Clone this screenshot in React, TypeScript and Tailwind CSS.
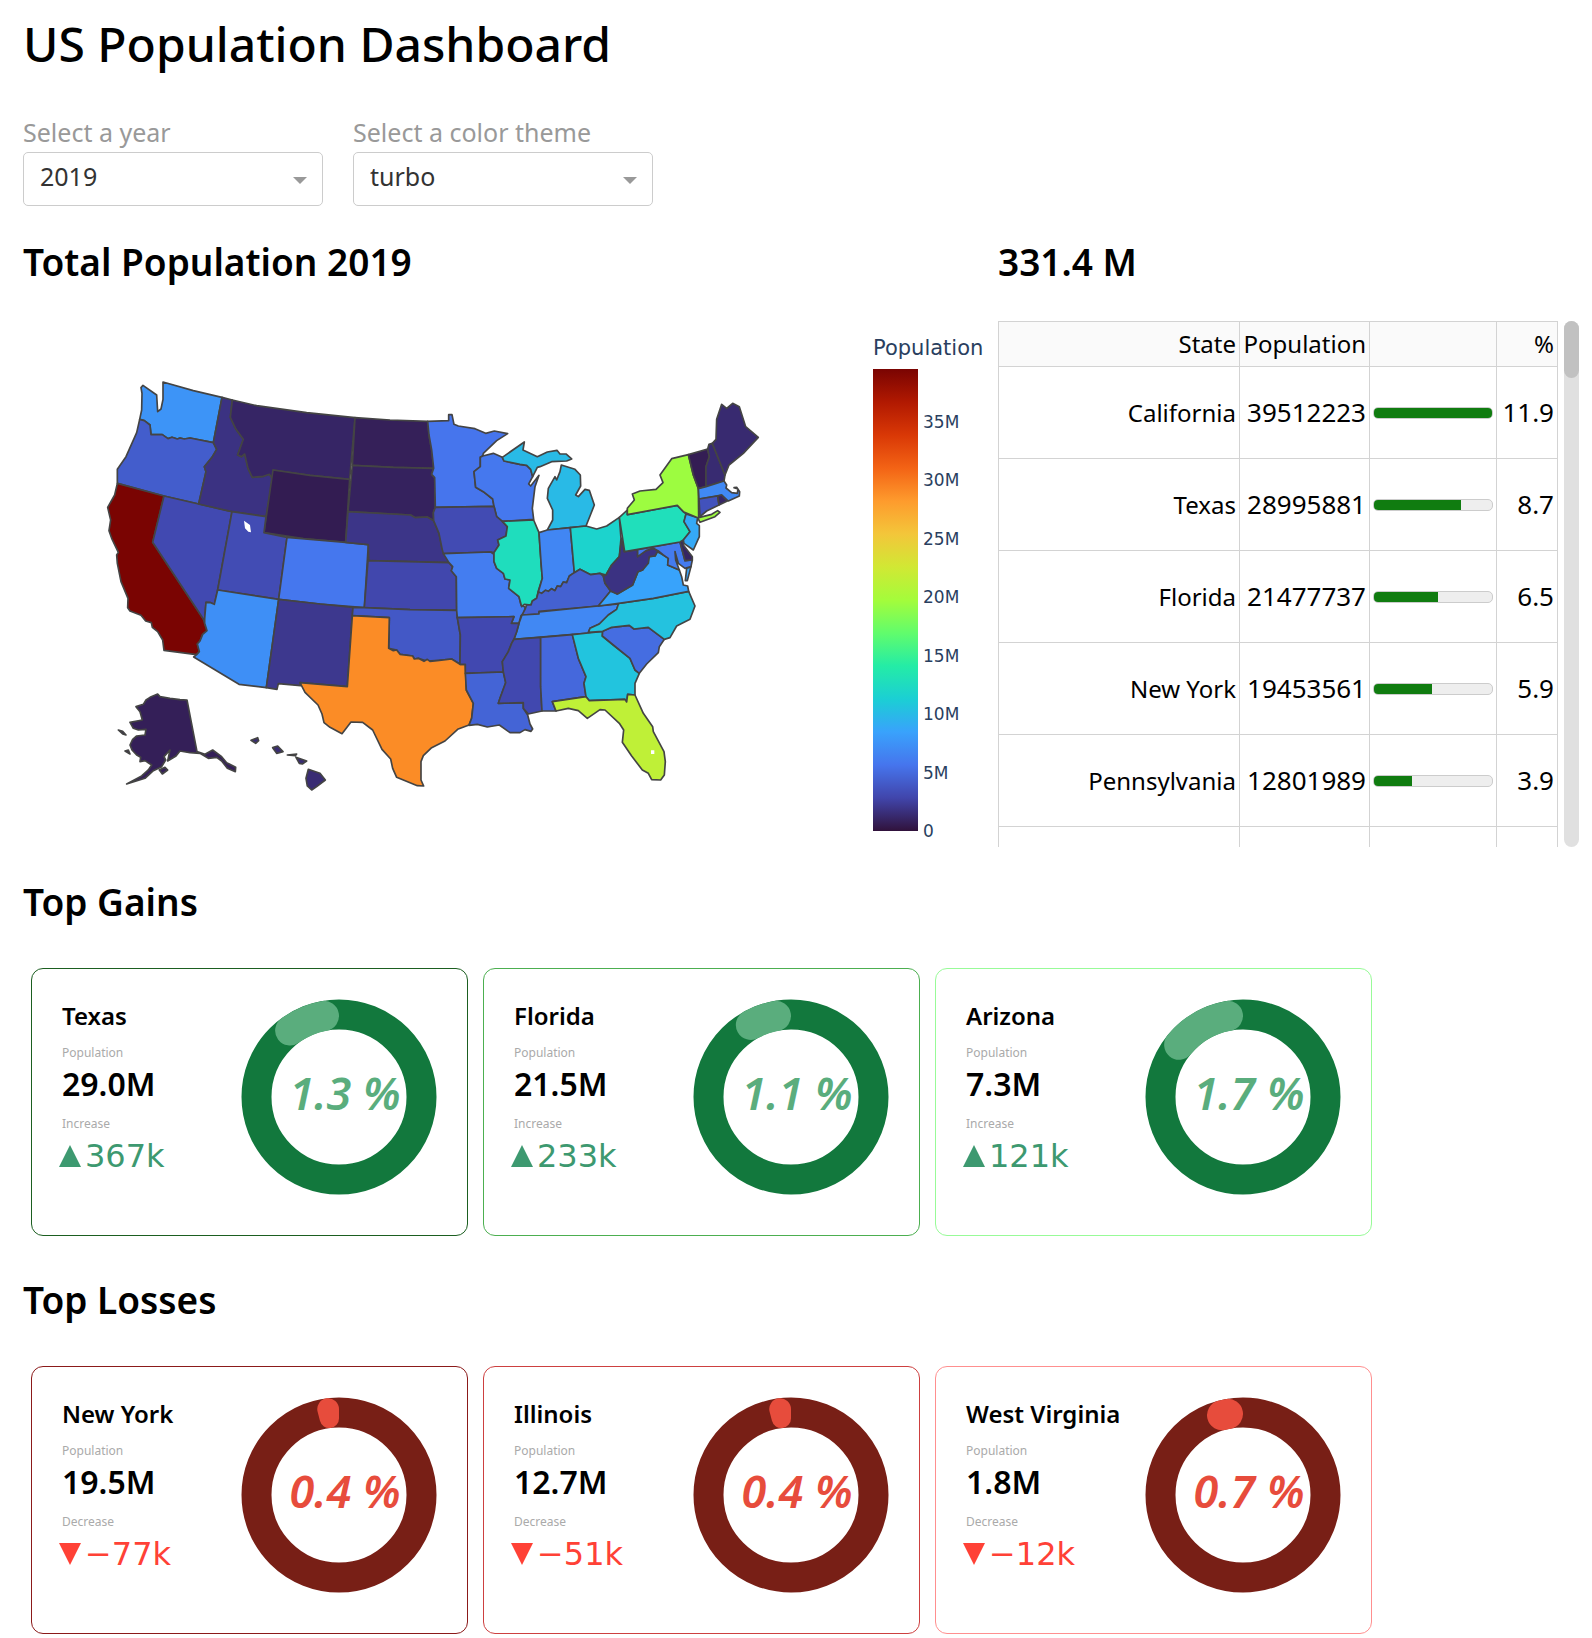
import { useState } from "react";

type Region = { pop: number; d: string[] };

// Outlines are in thirds of a chart pixel.
const REGIONS: Record<string, Region> = {
  Washington: { pop: 7614893, d: ["423,1163 429,1156 470,1185 473,1235 483,1227 489,1198 489,1146 580,1172 666,1192 640,1328 570,1314 553,1317 540,1314 532,1317 516,1312 504,1316 487,1304 453,1304 450,1275 433,1262 419,1258 425,1230 426,1180"] },
  Oregon: { pop: 4217737, d: ["419,1258 433,1262 450,1275 453,1304 487,1304 504,1316 516,1312 532,1317 540,1314 553,1317 570,1314 640,1328 650,1348 636,1372 613,1400 618,1415 596,1512 492,1488 352,1450 352,1408 378,1370 410,1298"] },
  California: { pop: 39512223, d: ["352,1450 492,1488 458,1627 610,1857 614,1870 621,1892 608,1903 600,1923 592,1932 598,1955 590,1964 492,1951 488,1920 473,1895 457,1882 454,1868 437,1863 423,1846 390,1833 383,1823 384,1795 363,1745 352,1690 350,1665 355,1657 335,1615 327,1592 332,1560 323,1522 344,1485"] },
  Nevada: { pop: 3080156, d: ["492,1488 596,1512 696,1535 653,1770 643,1813 632,1808 618,1807 614,1857 610,1857 458,1627"] },
  Idaho: { pop: 1787065, d: ["666,1192 697,1200 691,1252 708,1288 730,1318 713,1365 725,1370 734,1362 744,1405 757,1432 790,1429 808,1423 818,1437 798,1550 696,1535 596,1512 618,1415 613,1400 636,1372 650,1348 640,1328"] },
  Montana: { pop: 1068778, d: ["697,1200 770,1217 920,1238 1065,1253 1049,1438 930,1426 819,1410 818,1437 808,1423 790,1429 757,1432 744,1405 734,1362 725,1370 713,1365 730,1318 708,1288 691,1252"] },
  Wyoming: { pop: 578759, d: ["819,1410 930,1426 1049,1438 1037,1627 910,1616 792,1598"] },
  Utah: { pop: 3205958, d: ["696,1535 798,1550 792,1598 861,1612 836,1798 653,1770"] },
  Colorado: { pop: 5758736, d: ["861,1612 1037,1627 1105,1634 1093,1823 960,1812 836,1798"] },
  Arizona: { pop: 7278717, d: ["653,1770 836,1798 799,2063 717,2053 581,1971 590,1964 598,1955 592,1932 600,1923 608,1903 621,1892 614,1870 614,1857 618,1807 632,1808 643,1813"] },
  "New Mexico": { pop: 2096829, d: ["836,1798 960,1812 1059,1822 1057,1847 1042,2060 900,2048 902,2057 835,2051 831,2068 799,2063"] },
  "North Dakota": { pop: 762062, d: ["1065,1253 1170,1260 1283,1264 1287,1305 1295,1350 1301,1405 1180,1402 1057,1396"] },
  "South Dakota": { pop: 884659, d: ["1057,1396 1180,1402 1301,1405 1295,1423 1304,1433 1306,1522 1300,1538 1301,1562 1282,1551 1245,1553 1232,1545 1044,1535"] },
  Nebraska: { pop: 1934408, d: ["1044,1535 1232,1545 1245,1553 1282,1551 1301,1562 1317,1600 1326,1645 1347,1688 1106,1682 1105,1634 1037,1627"] },
  Kansas: { pop: 2913314, d: ["1104,1682 1347,1688 1358,1700 1354,1712 1369,1730 1370,1831 1230,1829 1093,1823"] },
  Oklahoma: { pop: 3956971, d: ["1059,1822 1093,1823 1230,1829 1370,1831 1372,1853 1381,1905 1380,1993 1355,1977 1318,1981 1280,1983 1255,1975 1243,1977 1238,1968 1200,1963 1190,1950 1166,1945 1168,1853 1057,1847"] },
  Texas: { pop: 28995881, d: ["1057,1847 1168,1853 1166,1945 1180,1952 1190,1950 1200,1963 1238,1968 1243,1977 1255,1975 1272,1984 1282,1978 1290,1984 1318,1981 1355,1977 1380,1993 1396,1993 1399,2070 1420,2110 1415,2155 1407,2175 1373,2188 1335,2223 1295,2243 1270,2267 1263,2285 1263,2340 1271,2358 1252,2357 1190,2332 1178,2305 1172,2277 1146,2248 1118,2190 1088,2167 1053,2166 1026,2201 990,2182 972,2168 966,2142 954,2115 915,2077 900,2048 1042,2060"] },
  Minnesota: { pop: 5639632, d: ["1283,1264 1346,1262 1346,1244 1356,1244 1362,1273 1375,1278 1425,1286 1457,1300 1483,1293 1523,1301 1490,1322 1450,1360 1448,1368 1441,1372 1441,1400 1422,1415 1427,1462 1450,1475 1478,1497 1482,1519 1306,1522 1304,1433 1295,1423 1301,1405 1295,1350 1287,1305"] },
  Wisconsin: { pop: 5822434, d: ["1448,1368 1480,1360 1507,1372 1512,1383 1560,1393 1580,1396 1592,1408 1598,1430 1586,1452 1592,1458 1617,1426 1605,1460 1597,1525 1601,1558 1507,1564 1490,1550 1482,1519 1478,1497 1450,1475 1427,1462 1422,1415 1441,1400 1441,1372"] },
  Michigan: { pop: 9986857, d: ["1507,1372 1573,1326 1569,1350 1612,1370 1642,1356 1671,1351 1680,1362 1698,1362 1715,1377 1700,1383 1655,1385 1620,1400 1612,1402 1598,1430 1592,1408 1580,1396 1560,1393 1512,1383", "1684,1395 1725,1408 1741,1425 1742,1458 1727,1485 1735,1490 1755,1468 1768,1471 1783,1515 1770,1548 1758,1578 1711,1583 1642,1590 1658,1560 1658,1530 1642,1495 1645,1465 1665,1430 1670,1440 1680,1415"] },
  Iowa: { pop: 3155070, d: ["1306,1522 1482,1519 1490,1550 1507,1564 1522,1580 1518,1608 1493,1620 1497,1635 1482,1658 1472,1656 1330,1661 1326,1645 1317,1600 1301,1562 1300,1538"] },
  Missouri: { pop: 6137428, d: ["1330,1661 1472,1656 1482,1663 1482,1685 1490,1705 1510,1720 1515,1737 1530,1740 1526,1765 1557,1790 1563,1815 1576,1822 1570,1845 1563,1847 1557,1870 1534,1870 1542,1850 1372,1853 1370,1831 1369,1730 1354,1712 1358,1700 1347,1688"] },
  Illinois: { pop: 12671821, d: ["1507,1564 1601,1560 1617,1598 1624,1700 1627,1735 1615,1772 1610,1795 1597,1803 1593,1815 1573,1813 1565,1820 1557,1790 1526,1765 1530,1740 1515,1737 1510,1720 1490,1705 1482,1685 1482,1658 1497,1635 1493,1620 1518,1608 1522,1580"] },
  Indiana: { pop: 6732219, d: ["1617,1598 1642,1590 1711,1583 1723,1718 1708,1728 1700,1748 1690,1746 1682,1760 1672,1758 1665,1772 1655,1766 1645,1774 1636,1771 1625,1780 1615,1776 1627,1735 1624,1700"] },
  Ohio: { pop: 11689100, d: ["1711,1583 1758,1578 1790,1587 1820,1578 1858,1552 1863,1615 1858,1670 1835,1695 1818,1725 1800,1720 1772,1724 1740,1708 1723,1718"] },
  Kentucky: { pop: 4467673, d: ["1723,1718 1740,1708 1772,1724 1800,1720 1810,1728 1815,1750 1832,1773 1795,1818 1617,1834 1617,1842 1566,1845 1575,1828 1580,1815 1593,1815 1597,1803 1610,1795 1615,1776 1625,1780 1636,1771 1645,1774 1655,1766 1665,1772 1672,1758 1682,1760 1690,1746 1700,1748 1708,1728"] },
  Tennessee: { pop: 6829174, d: ["1566,1845 1617,1842 1617,1836 1795,1818 1856,1812 1850,1828 1825,1845 1798,1872 1770,1885 1765,1899 1542,1918 1550,1895 1557,1870"] },
  Arkansas: { pop: 3017804, d: ["1372,1853 1542,1850 1534,1870 1557,1870 1550,1895 1542,1917 1535,1930 1525,1955 1507,1985 1510,2016 1396,2020 1396,1993 1380,1993 1381,1905"] },
  Louisiana: { pop: 4648794, d: ["1396,2020 1510,2016 1517,2048 1500,2095 1495,2110 1570,2108 1570,2125 1583,2145 1590,2172 1598,2187 1593,2194 1575,2189 1560,2198 1530,2198 1498,2175 1462,2181 1432,2173 1407,2176 1415,2155 1420,2110 1399,2070"] },
  Mississippi: { pop: 2976149, d: ["1542,1918 1622,1912 1622,2060 1626,2133 1585,2142 1570,2125 1570,2108 1495,2110 1500,2095 1517,2048 1510,2016 1507,1985 1525,1955 1535,1930"] },
  Alabama: { pop: 4903185, d: ["1622,1912 1717,1904 1735,1975 1758,2030 1752,2050 1758,2090 1657,2105 1668,2133 1640,2133 1626,2133 1622,2060"] },
  Georgia: { pop: 10617423, d: ["1717,1904 1765,1899 1808,1894 1807,1908 1840,1935 1890,1975 1905,2010 1918,2020 1905,2050 1905,2085 1883,2083 1880,2106 1875,2098 1768,2102 1758,2090 1752,2050 1758,2030 1735,1975"] },
  Florida: { pop: 21477737, d: ["1657,2105 1758,2090 1768,2102 1875,2098 1880,2106 1883,2083 1905,2085 1930,2140 1958,2180 1960,2195 1992,2255 1996,2285 1993,2325 1982,2340 1955,2339 1945,2320 1927,2310 1895,2268 1867,2227 1871,2190 1858,2170 1815,2130 1800,2129 1762,2155 1735,2132 1705,2125 1668,2133"] },
  "South Carolina": { pop: 5148714, d: ["1807,1908 1808,1894 1835,1882 1888,1876 1902,1887 1945,1882 1993,1918 1978,1940 1975,1958 1940,1992 1918,2020 1905,2010 1890,1975 1840,1935"] },
  "North Carolina": { pop: 10488084, d: ["1856,1810 1960,1795 2066,1774 2085,1818 2070,1858 2030,1878 2010,1913 1993,1918 1945,1882 1902,1887 1888,1876 1835,1882 1808,1894 1765,1897 1770,1885 1798,1872 1825,1845 1850,1828"] },
  Virginia: { pop: 8535519, d: ["1795,1818 1856,1810 1960,1795 2066,1774 2063,1758 2050,1755 2045,1730 2038,1710 2003,1695 2005,1675 1990,1665 1972,1655 1965,1668 1945,1670 1928,1710 1914,1715 1898,1755 1852,1782 1832,1773", "2060,1705 2073,1700 2062,1742 2056,1742"] },
  "West Virginia": { pop: 1792147, d: ["1832,1773 1852,1782 1898,1755 1914,1715 1928,1710 1945,1690 1948,1670 1965,1668 1974,1652 1960,1645 1938,1652 1913,1670 1913,1649 1872,1655 1865,1615 1858,1670 1835,1695 1818,1725 1810,1728 1815,1750"] },
  Maryland: { pop: 6045680, d: ["1913,1649 2040,1626 2055,1682 2077,1680 2073,1700 2055,1705 2035,1690 2025,1655 2027,1680 2038,1710 2003,1695 2005,1675 1990,1665 1974,1652 1960,1645 1938,1652 1913,1670"] },
  Delaware: { pop: 973764, d: ["2040,1626 2050,1620 2050,1635 2077,1670 2077,1680 2055,1682"] },
  Pennsylvania: { pop: 12801989, d: ["1858,1552 1882,1530 1882,1544 2032,1516 2050,1535 2058,1542 2052,1565 2070,1595 2050,1620 2040,1626 1874,1655"] },
  "New Jersey": { pop: 8882190, d: ["2058,1542 2093,1553 2090,1570 2098,1577 2098,1610 2080,1650 2052,1630 2050,1620 2070,1595 2052,1565"] },
  "New York": { pop: 19453561, d: ["1882,1544 1882,1525 1903,1500 1897,1482 1920,1473 1968,1468 1989,1448 1980,1425 2015,1376 2065,1364 2080,1425 2095,1465 2096,1553 2135,1543 2153,1532 2160,1537 2145,1550 2100,1567 2093,1553 2050,1535 2032,1516"] },
  Vermont: { pop: 623989, d: ["2065,1364 2123,1347 2128,1370 2118,1400 2118,1460 2095,1466 2080,1425"] },
  "New Hampshire": { pop: 1359711, d: ["2123,1347 2127,1333 2137,1330 2175,1425 2172,1443 2118,1460 2118,1400 2128,1370"] },
  Maine: { pop: 1344212, d: ["2137,1330 2148,1318 2150,1258 2165,1213 2180,1225 2198,1210 2218,1220 2237,1280 2275,1312 2230,1360 2187,1395 2175,1425"] },
  Massachusetts: { pop: 6892503, d: ["2095,1466 2118,1460 2172,1443 2180,1455 2178,1464 2195,1478 2212,1480 2214,1467 2202,1463 2210,1462 2219,1475 2218,1488 2185,1503 2165,1485 2097,1497"] },
  Connecticut: { pop: 3565287, d: ["2097,1497 2153,1488 2157,1515 2120,1533 2100,1550"] },
  "Rhode Island": { pop: 1059361, d: ["2153,1488 2165,1485 2182,1503 2157,1515"] },
  Alaska: { pop: 731545, d: ["473,2082 480,2090 510,2095 540,2099 561,2100 591,2255 615,2263 638,2250 665,2270 680,2288 707,2302 706,2315 682,2305 665,2283 650,2272 625,2275 600,2260 570,2258 540,2253 528,2268 503,2283 510,2250 492,2270 497,2280 485,2300 460,2312 435,2335 380,2352 425,2328 445,2310 455,2295 435,2282 420,2285 422,2272 410,2265 396,2250 390,2235 398,2218 410,2208 435,2205 438,2188 415,2190 400,2185 390,2167 427,2160 420,2135 408,2120 430,2113 438,2100 450,2092", "355,2190 368,2194 378,2205 368,2202", "375,2253 385,2250 390,2262", "478,2310 495,2302 503,2310 487,2322"] },
  Hawaii: { pop: 1415872, d: ["753,2221 773,2213 776,2222 767,2230", "818,2243 833,2238 849,2255 830,2260", "862,2265 890,2262 886,2267", "888,2272 920,2283 907,2292 898,2290", "925,2308 960,2320 976,2340 950,2360 935,2370 922,2358 918,2335"] },
};

const TURBO = ["#30123b", "#4145ab", "#4675ed", "#39a2fc", "#1bcfd4", "#24eca6", "#61fc6c", "#a4fc3b", "#d1e834", "#f3c63a", "#fe9b2d", "#f36315", "#d93806", "#b11901", "#7a0402"];
const MAX_POP = 39512223;

function turbo(pop: number) {
  const t = (pop / MAX_POP) * (TURBO.length - 1);
  const i = Math.min(Math.floor(t), TURBO.length - 2);
  const at = (hex: string, k: number) => parseInt(hex.slice(1 + 2 * k, 3 + 2 * k), 16);
  const c = [0, 1, 2].map((k) => Math.round(at(TURBO[i], k) + (at(TURBO[i + 1], k) - at(TURBO[i], k)) * (t - i)));
  return `rgb(${c.join(",")})`;
}

function PopulationMap() {
  return (
    <svg viewBox="23 321 975 526" className="block w-full" role="img" aria-label="Population by state">
      <defs>
        <linearGradient id="turbo" x1="0" y1="1" x2="0" y2="0">
          {TURBO.map((c, i) => (
            <stop key={c} offset={i / (TURBO.length - 1)} stopColor={c} />
          ))}
        </linearGradient>
      </defs>
      <g transform="scale(0.33333)" stroke="#444444" strokeWidth="5" strokeLinejoin="round">
        {Object.entries(REGIONS).map(([name, r]) => (
          <path key={name} d={r.d.map((p) => `M${p}Z`).join("")} fill={turbo(r.pop)} />
        ))}
        <path d="M732,1562L750,1575L753,1597L745,1595L735,1585ZM1953,2251h10v11h-10Z" fill="#fff" stroke="none" />
      </g>
      <rect x="873" y="369" width="45" height="462" fill="url(#turbo)" />
      <g fill="#2a3f5f" className="font-['DejaVu_Sans','Verdana',sans-serif]">
        <text x="873" y="355" fontSize="21">Population</text>
        <g fontSize="17">
          {[0, 5, 10, 15, 20, 25, 30, 35].map((m) => (
            <text key={m} x="923" y={837 - (m * 1e6 * 462) / MAX_POP}>{m ? `${m}M` : "0"}</text>
          ))}
        </g>
      </g>
    </svg>
  );
}

const ROWS = [
  { state: "California", pop: 39512223, pct: "11.9" },
  { state: "Texas", pop: 28995881, pct: "8.7" },
  { state: "Florida", pop: 21477737, pct: "6.5" },
  { state: "New York", pop: 19453561, pct: "5.9" },
  { state: "Pennsylvania", pop: 12801989, pct: "3.9" },
];

function PopulationTable() {
  const cell = "border border-[#d3d3d3] px-[3px]";
  const edge = "border-x border-[#d3d3d3]";
  return (
    <div className="flex gap-1.5">
      <div className="min-w-0 flex-1">
        <table className="w-full table-fixed border-collapse text-right text-2xl text-black">
          <colgroup>
            <col />
            <col className="w-[130px]" />
            <col className="w-[127px]" />
            <col className="w-[61px]" />
          </colgroup>
          <thead>
            <tr className="h-[45px] bg-[#fafafa]">
              <th scope="col" className={`${cell} font-normal`}>State</th>
              <th scope="col" className={`${cell} font-normal`}>Population</th>
              <th scope="col" className={`${cell} font-normal`} aria-label="Share" />
              <th scope="col" className={`${cell} font-normal`}>%</th>
            </tr>
          </thead>
          <tbody>
            {ROWS.map((r) => (
              <tr key={r.state} className="h-[92px]">
                <td className={cell}>{r.state}</td>
                <td className={`${cell} text-[26px]`}>{r.pop}</td>
                <td className={cell}>
                  <div className="h-3 overflow-hidden rounded-[5px] border border-[#cccccc] bg-[#eeeeee]">
                    <div className="h-full bg-[#107c10]" style={{ width: `${(r.pop / MAX_POP) * 100}%` }} />
                  </div>
                </td>
                <td className={`${cell} text-[26px]`}>{r.pct}</td>
              </tr>
            ))}
            <tr className="h-5" aria-hidden="true">
              <td className={edge} />
              <td className={edge} />
              <td className={edge} />
              <td className={edge} />
            </tr>
          </tbody>
        </table>
      </div>
      <div className="w-[15px] rounded-full bg-[#e0e0e0]">
        <div className="h-[57px] rounded-full bg-[#c1c1c1]" />
      </div>
    </div>
  );
}

function Dropdown({ id, label, options, initial }: { id: string; label: string; options: string[]; initial: string }) {
  const [value, setValue] = useState(initial);
  return (
    <div className="w-[300px]">
      <label htmlFor={id} className="block text-[25px] leading-8 text-[#999999]">{label}</label>
      <div className="relative mt-1">
        <select
          id={id}
          value={value}
          onChange={(e) => setValue(e.target.value)}
          className="h-[54px] w-full appearance-none rounded-[5px] border border-[#cccccc] bg-white pr-10 pb-1 pl-4 text-[25px] text-[#333333]"
        >
          {options.map((o) => (
            <option key={o}>{o}</option>
          ))}
        </select>
        <svg viewBox="0 0 14 7" className="pointer-events-none absolute top-[25px] right-4 w-3.5" aria-hidden="true">
          <path d="M0 0h14l-7 7z" fill="#999999" />
        </svg>
      </div>
    </div>
  );
}

type Change = { state: string; pop: string; delta: string; rate: number; border: string };

const GAINS: Change[] = [
  { state: "Texas", pop: "29.0M", delta: "367k", rate: 1.3, border: "border-[#1b5e20]" },
  { state: "Florida", pop: "21.5M", delta: "233k", rate: 1.1, border: "border-[#4caf50]" },
  { state: "Arizona", pop: "7.3M", delta: "121k", rate: 1.7, border: "border-[#98fb98]" },
];
const LOSSES: Change[] = [
  { state: "New York", pop: "19.5M", delta: "−77k", rate: 0.4, border: "border-[#8b1a1a]" },
  { state: "Illinois", pop: "12.7M", delta: "−51k", rate: 0.4, border: "border-[#cd4040]" },
  { state: "West Virginia", pop: "1.8M", delta: "−12k", rate: 0.7, border: "border-[#ff8f8f]" },
];

const OUTER = 97.5;
const INNER = 67.5;
const MID = (OUTER + INNER) / 2;

function Donut({ rate, up }: { rate: number; up: boolean }) {
  const sweep = rate * 36;
  const pt = (r: number, deg: number) => {
    const a = (deg * Math.PI) / 180;
    return `${(98 - r * Math.sin(a)).toFixed(2)} ${(98 - r * Math.cos(a)).toFixed(2)}`;
  };
  const color = up ? "#5aad7d" : "#e74c3c";
  const capAngle = (Math.asin(15 / MID) * 180) / Math.PI;
  const wide = sweep > 2 * capAngle;

  // A sector too narrow for full round caps becomes a tapered capsule.
  const half = (sweep * Math.PI) / 360;
  const s = Math.sin(half);
  const ro = OUTER / (1 + s);
  const ri = INNER / (1 - s);
  const to = ro * Math.cos(half);
  const ti = ri * Math.cos(half);
  const capsule = `M${pt(ti, 0)}L${pt(to, 0)}A${ro * s} ${ro * s} 0 1 0 ${pt(to, sweep)}L${pt(ti, sweep)}A${ri * s} ${ri * s} 0 0 0 ${pt(ti, 0)}Z`;

  return (
    <svg viewBox="0 0 196 196" className="w-[196px] shrink-0" role="img" aria-label={`${rate} %`}>
      <circle cx="98" cy="98" r={MID} fill="none" stroke={up ? "#12783d" : "#781f16"} strokeWidth="30" />
      {wide ? (
        <path
          d={`M${pt(MID, capAngle)}A${MID} ${MID} 0 0 0 ${pt(MID, sweep - capAngle)}`}
          fill="none"
          stroke={color}
          strokeWidth="30"
          strokeLinecap="round"
        />
      ) : (
        <path d={capsule} fill={color} />
      )}
      <text x="104" y="111" textAnchor="middle" fontSize="45" fill={color} className="font-semibold italic">
        {rate} %
      </text>
    </svg>
  );
}

function ChangeCard({ c, up }: { c: Change; up: boolean }) {
  return (
    <article className={`flex h-[268px] items-start justify-between rounded-[12px] border p-[30px] ${c.border}`}>
      <div className="mt-px whitespace-nowrap">
        <h3 className="text-2xl leading-8 font-semibold">{c.state}</h3>
        <p className="mt-[13px] text-xs leading-4 text-[#aaaaaa]">Population</p>
        <p className="mt-[3px] text-[32px] leading-10 font-semibold">{c.pop}</p>
        <p className="mt-3 text-xs leading-4 text-[#aaaaaa]">{up ? "Increase" : "Decrease"}</p>
        <p className={`mt-1 -ml-[3px] flex items-center gap-1 font-['DejaVu_Sans','Verdana',sans-serif] text-[32px] leading-10 ${up ? "text-[#3d9970]" : "text-[#ff4136]"}`}>
          <svg viewBox="0 0 22 22" className="w-[22px]" aria-hidden="true">
            <path d={up ? "M11 0L22 22H0Z" : "M0 0H22L11 22Z"} fill="currentColor" />
          </svg>
          {c.delta}
        </p>
      </div>
      <Donut rate={c.rate} up={up} />
    </article>
  );
}

function ChangeSection({ title, items, up }: { title: string; items: Change[]; up: boolean }) {
  return (
    <section>
      <h2 className="text-[37px] leading-[48px] font-semibold">{title}</h2>
      <div className="mt-[42px] ml-2 grid max-w-[1341px] grid-cols-3 gap-[15px]">
        {items.map((c) => (
          <ChangeCard key={c.state} c={c} up={up} />
        ))}
      </div>
    </section>
  );
}

export default function App() {
  return (
    <main className="bg-white pt-2 pr-[13px] pl-[23px] font-['Noto_Sans','Lucida_Sans',sans-serif] text-black">
      <h1 className="text-5xl leading-[72px] font-medium">US Population Dashboard</h1>
      <div className="mt-9 flex gap-[30px]">
        <Dropdown id="year" label="Select a year" options={["2019", "2018", "2017", "2016", "2015"]} initial="2019" />
        <Dropdown id="theme" label="Select a color theme" options={["turbo", "viridis", "plasma", "magma"]} initial="turbo" />
      </div>
      <div className="mt-8 grid grid-cols-[975fr_581fr]">
        <section>
          <h2 className="mb-[35px] text-[37px] leading-[48px] font-semibold">Total Population 2019</h2>
          <PopulationMap />
        </section>
        <section>
          <h2 className="mb-[35px] text-[37px] leading-[48px] font-semibold">331.4 M</h2>
          <PopulationTable />
        </section>
      </div>
      <div className="mt-[31px] flex flex-col gap-10">
        <ChangeSection title="Top Gains" items={GAINS} up />
        <ChangeSection title="Top Losses" items={LOSSES} up={false} />
      </div>
    </main>
  );
}
